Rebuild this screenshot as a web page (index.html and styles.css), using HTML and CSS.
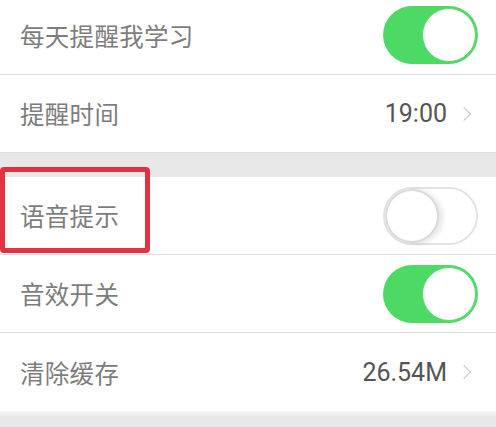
FILE: index.html
```html
<!DOCTYPE html>
<html lang="zh">
<head>
<meta charset="utf-8">
<link rel="stylesheet" href="styles.css">
</head>
<body>
<div class="page">
  <div class="group">
    <div class="row row-first">
      <span class="label">每天提醒我学习</span>
      <span class="switch on"><span class="knob"></span></span>
    </div>
    <div class="row">
      <span class="label">提醒时间</span>
      <span class="value">19:00<span class="chev"></span></span>
    </div>
  </div>
  <div class="gap"></div>
  <div class="group">
    <div class="row highlighted">
      <span class="label">语音提示</span>
      <span class="switch off"><span class="knob"></span></span>
      <span class="mark"></span>
    </div>
    <div class="row">
      <span class="label">音效开关</span>
      <span class="switch on"><span class="knob"></span></span>
    </div>
    <div class="row last">
      <span class="label">清除缓存</span>
      <span class="value">26.54M<span class="chev"></span></span>
    </div>
  </div>
  <div class="bottom"></div>
</div>
</body>
</html>
```
FILE: styles.css
```css
html, body {
  margin: 0;
  padding: 0;
  background: #ffffff;
}
.page {
  width: 496px;
  height: 427px;
  overflow: hidden;
  font-family: "Noto Sans CJK SC", "Noto Sans", sans-serif;
  background: #e8e8e8;
}
.group {
  background: #ffffff;
}
.row {
  position: relative;
  height: 77px;
  display: flex;
  align-items: center;
  justify-content: space-between;
  padding: 0 18px 0 20px;
  border-bottom: 1px solid #dedede;
  box-sizing: content-box;
}
.row-first {
  height: 70px;
  padding-bottom: 4px;
}
.row.last {
  border-bottom: none;
  height: 78px;
}
.label {
  font-size: 24.5px;
  color: #7d7d7d;
  letter-spacing: 0.3px;
}
.value {
  display: flex;
  align-items: center;
  font-family: Roboto, "Noto Sans", sans-serif;
  font-size: 25px;
  color: #555555;
  margin-right: 9px;
}
.chev {
  display: inline-block;
  width: 9px;
  height: 9px;
  border-top: 1.5px solid #c4c4c4;
  border-right: 1.5px solid #c4c4c4;
  transform: rotate(45deg);
  margin-left: 12px;
}
.switch {
  position: relative;
  width: 95px;
  height: 58px;
  border-radius: 29px;
  box-sizing: border-box;
}
.switch.on {
  background: #4cd964;
}
.switch.off {
  background: #ffffff;
  border: 2px solid #e3e3e3;
}
.knob {
  position: absolute;
  top: 2px;
  width: 54px;
  height: 54px;
  border-radius: 50%;
  background: #ffffff;
  box-sizing: border-box;
}
.switch.on .knob {
  right: 2px;
  border: 1px solid #5fd875;
}
.switch.off .knob {
  left: 0;
  top: 0;
  border: 2px solid #dadada;
  box-shadow: 4px 1px 5px rgba(0,0,0,0.1);
}
.gap {
  height: 24px;
  background: #e8e8e8;
}
.mark {
  position: absolute;
  left: 0;
  top: -10px;
  width: 150px;
  height: 86px;
  border: 5px solid #e23240;
  border-radius: 4px;
  box-sizing: border-box;
}
.bottom {
  height: 20px;
  background: linear-gradient(#f6f6f6, #e8e8e8 6px);
}
```
